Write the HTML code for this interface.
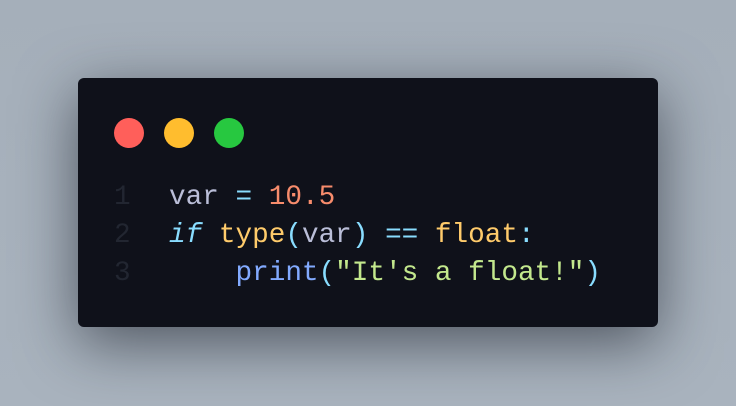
<!DOCTYPE html>
<html><head><style>
html,body{margin:0;width:736px;height:406px;overflow:hidden}
body{background:linear-gradient(180deg,#a5afba,#a9b3be);position:relative;font-family:"Liberation Mono",monospace}
.card{position:absolute;left:78px;top:78px;width:580px;height:249px;background:#0f111a;border-radius:6px;box-shadow:0 16px 60px rgba(20,25,35,.6)}
.dot{position:absolute;top:40px;width:30px;height:30px;border-radius:50%}
.code{position:absolute;left:36px;top:101px;font-size:27.7px;line-height:38px;white-space:pre;color:#babed8}
.n{color:#222631;display:inline-block;width:55px}
.o{color:#89ddff}.num{color:#f78c6c}.y{color:#ffcb6b}.b{color:#82aaff}.s{color:#c3e88d}
i{color:#89ddff}
</style></head><body>
<div class="card">
<div class="dot" style="left:36px;background:#ff5f5a"></div>
<div class="dot" style="left:86px;background:#ffbd2e"></div>
<div class="dot" style="left:136px;background:#27c840"></div>
<div class="code"><span class="n">1</span>var <span class="o">=</span> <span class="num">10.5</span>
<span class="n">2</span><i>if</i> <span class="y">type</span><span class="o">(</span>var<span class="o">)</span> <span class="o">==</span> <span class="y">float</span><span class="o">:</span>
<span class="n">3</span>    <span class="b">print</span><span class="o">(</span><span class="s">"It's a float!"</span><span class="o">)</span></div>
</div>
</body></html>
